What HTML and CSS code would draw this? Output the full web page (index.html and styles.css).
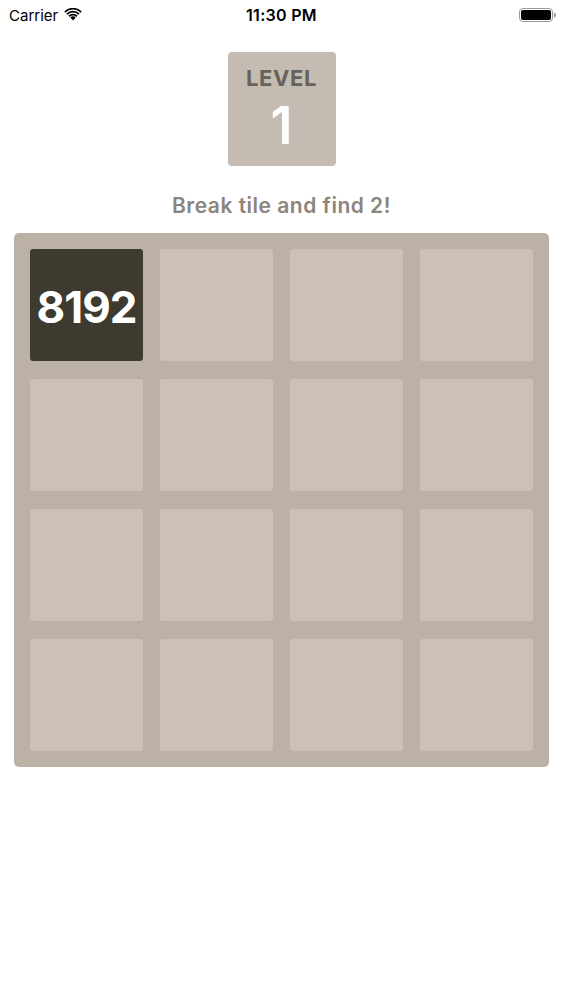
FILE: index.html
```html
<!DOCTYPE html>
<html>
<head>
<meta charset="utf-8">
<link rel="stylesheet" href="styles.css">
</head>
<body>
<div class="status">
  <div class="left">Carrier
    <svg class="wifi" width="18" height="13" viewBox="0 0 18 13"><path d="M9 12.5 L6.3 9.6 A3.8 3.8 0 0 1 11.7 9.6 Z" fill="#000"/><path d="M4.4 7.6 A6.5 6.5 0 0 1 13.6 7.6 L12.3 8.9 A4.7 4.7 0 0 0 5.7 8.9 Z" fill="#000"/><path d="M2.3 5.5 A9.5 9.5 0 0 1 15.7 5.5 L14.4 6.8 A7.6 7.6 0 0 0 3.6 6.8 Z" fill="#000"/><path d="M0.2 3.4 A12.5 12.5 0 0 1 17.8 3.4 L16.5 4.7 A10.6 10.6 0 0 0 1.5 4.7 Z" fill="#000"/></svg>
  </div>
  <div class="time">11:30 PM</div>
  <div class="right">
    <svg width="37" height="16" viewBox="0 0 37 16"><rect x="0.5" y="1.5" width="33" height="13" rx="3.5" fill="none" stroke="#999" stroke-width="1"/><rect x="2" y="3" width="30" height="10" rx="2" fill="#000"/><path d="M34.8 5.5 a2.2 2.5 0 0 1 0 5 z" fill="#999"/></svg>
  </div>
</div>
<div class="level">
  <div class="level-label">LEVEL</div>
  <div class="level-num">1</div>
</div>
<div class="hint">Break tile and find 2!</div>
<div class="board">
  <div class="tile dark">8192</div>
  <div class="tile"></div><div class="tile"></div><div class="tile"></div>
  <div class="tile"></div><div class="tile"></div><div class="tile"></div><div class="tile"></div>
  <div class="tile"></div><div class="tile"></div><div class="tile"></div><div class="tile"></div>
  <div class="tile"></div><div class="tile"></div><div class="tile"></div><div class="tile"></div>
</div>
</body>
</html>
```
FILE: styles.css
```css
html, body { margin: 0; padding: 0; background: #fff; }
body { font-family: Inter, "Liberation Sans", sans-serif; width: 563px; }
.status { height: 30px; display: flex; align-items: center; justify-content: space-between; padding: 0 7px 0 9px; position: relative; font-size: 15px; color: #000; }
.left { display: flex; align-items: center; gap: 6px; }
.wifi { margin-top: -2px; }
.time { position: absolute; left: 0; right: 0; text-align: center; font-weight: 600; font-size: 16px; letter-spacing: 0.3px; pointer-events: none; }
.right { display: flex; align-items: center; }
.level { width: 108px; height: 114px; margin: 22px auto 0; background: #c4bbb2; border-radius: 4px; display: flex; flex-direction: column; align-items: center; }
.level-label { margin-top: 13px; font-size: 22px; font-weight: 700; color: #67625a; letter-spacing: 0.6px; line-height: 26px; }
.level-num { margin-top: 5px; font-size: 52px; font-weight: 600; color: #fff; line-height: 60px; }
.hint { margin-top: 26px; text-align: center; font-size: 21px; font-weight: 600; color: #8b857d; height: 28px; line-height: 28px; letter-spacing: 0.5px; }
.board { width: 535px; height: 534px; margin: 13px 0 0 14px; box-sizing: border-box; background: #bcb1a7; border-radius: 5px; padding: 16px; display: grid; grid-template-columns: repeat(4, 113px); grid-template-rows: repeat(4, 112px); column-gap: 17px; row-gap: 18px; }
.tile { background: #ccc1b6; border-radius: 3px; display: flex; align-items: center; justify-content: center; }
.tile.dark { background: #3e3a2f; color: #fff; font-size: 44px; font-weight: 700; letter-spacing: -1px; padding-top: 3px; box-sizing: border-box; }
```
